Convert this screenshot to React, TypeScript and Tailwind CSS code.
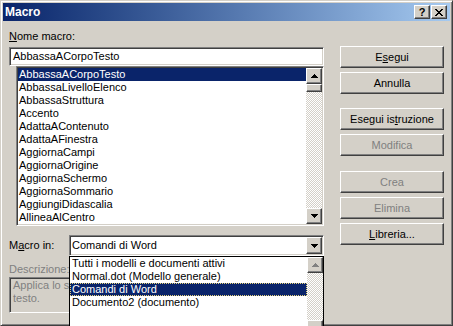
import React from 'react';

const macros = [
  "AbbassaACorpoTesto",
  "AbbassaLivelloElenco",
  "AbbassaStruttura",
  "Accento",
  "AdattaAContenuto",
  "AdattaAFinestra",
  "AggiornaCampi",
  "AggiornaOrigine",
  "AggiornaSchermo",
  "AggiornaSommario",
  "AggiungiDidascalia",
  "AllineaAlCentro",
];

const sources = [
  "Tutti i modelli e documenti attivi",
  "Normal.dot (Modello generale)",
  "Comandi di Word",
  "Documento2 (documento)",
];

// classic 3D edges
const raised =
  "border border-t-white border-l-white border-r-[#404040] border-b-[#404040] bg-[#d4d0c8] shadow-[inset_-1px_-1px_#808080]";
const sunken =
  "border border-t-[#808080] border-l-[#808080] border-r-white border-b-white shadow-[inset_1px_1px_#404040,inset_-1px_-1px_#d4d0c8] p-[1px]";
const checker =
  "bg-[image:repeating-conic-gradient(#d4d0c8_0%_25%,#ffffff_0%_50%)] bg-[length:2px_2px]";

const Arrow = ({ up, gray }: { up?: boolean; gray?: boolean }) => {
  const fill = gray ? "#808080" : "#000000";
  const rows = up ? [3, 2, 1, 0] : [0, 1, 2, 3];
  return (
    <svg width="7" height="4" viewBox="0 0 7 4" shapeRendering="crispEdges" className="block">
      {rows.map((inset, y) => (
        <rect key={y} x={inset} y={y} width={7 - inset * 2} height="1" fill={fill} />
      ))}
    </svg>
  );
};

const ScrollBtn = ({ up, gray, h = 16 }: { up?: boolean; gray?: boolean; h?: number }) => (
  <div className={`${raised} w-[16px] flex items-center justify-center ${h === 16 ? 'h-[16px]' : 'h-[17px]'}`}>
    <Arrow up={up} gray={gray} />
  </div>
);

const Btn = ({ children, disabled }: { children: React.ReactNode; disabled?: boolean }) => (
  <div
    className={`${raised} h-[22px] w-[104px] flex items-center justify-center leading-[13px] ${
      disabled ? 'text-[#808080]' : 'text-black'
    }`}
  >
    {children}
  </div>
);

const App: React.FC = () => {
  return (
    <div className="w-[453px] h-[326px] overflow-hidden bg-[#d4d0c8] font-['Liberation_Sans',Arial,sans-serif] text-[11px] text-black">
      <div className="relative h-full border border-t-[#d4d0c8] border-l-[#d4d0c8] border-r-[#404040] border-b-[#404040] shadow-[inset_1px_1px_#ffffff,inset_-1px_-1px_#808080] p-[2px]">
        {/* title bar */}
        <div className="h-[18px] flex items-center justify-between pl-[2px] pr-[3px] bg-linear-to-r from-[#0a246a] to-[#a6caf0]">
          <span className="text-white font-bold text-[12px] leading-[13px]">Macro</span>
          <div className="flex gap-[1px]">
            <div className={`${raised} w-[16px] h-[14px] flex items-center justify-center font-bold text-[11px] leading-[10px] pb-[1px]`}>
              ?
            </div>
            <div className={`${raised} w-[16px] h-[14px] flex items-center justify-center`}>
              <svg width="8" height="7" viewBox="0 0 8 7" shapeRendering="crispEdges">
                <path d="M0 0h2v1h-2zM6 0h2v1h-2zM1 1h2v1h-2zM5 1h2v1h-2zM2 2h4v1h-4zM3 3h2v1h-2zM2 4h4v1h-4zM1 5h2v1h-2zM5 5h2v1h-2zM0 6h2v1h-2zM6 6h2v1h-2z" fill="#000" />
              </svg>
            </div>
          </div>
        </div>

        <div className="flex gap-[16px] px-[6px]">
          {/* left column */}
          <div className="w-[315px] flex flex-col">
            <div className="mt-[9px] h-[13px] leading-[13px]">
              <u>N</u>ome macro:
            </div>
            <div className={`${sunken} mt-[4px] h-[19px] bg-white leading-[15px] pl-[3px]`}>AbbassaACorpoTesto</div>

            <div className={`${sunken} ml-[7px] w-[308px] h-[160px] bg-white flex`}>
              <div className="flex-1 flex flex-col">
                {macros.map((m, i) => (
                  <div
                    key={m}
                    className={`h-[13px] leading-[13px] pl-[1px] whitespace-nowrap ${
                      i === 0 ? 'bg-[#0a246a] text-white' : ''
                    }`}
                  >
                    {m}
                  </div>
                ))}
              </div>
              <div className="w-[16px] flex flex-col">
                <ScrollBtn up />
                <div className={`flex-1 ${checker} flex flex-col`}>
                  <div className={`${raised} h-[8px] w-[16px]`} />
                </div>
                <ScrollBtn />
              </div>
            </div>

            <div className="mt-[9px] h-[21px] flex items-center">
              <div className="w-[60px] leading-[13px]">
                M<u>a</u>cro in:
              </div>
              <div className="relative w-[255px] h-[21px]">
                <div className={`${sunken} h-full bg-white flex`}>
                  <div className="flex-1 leading-[17px] pl-[1px]">Comandi di Word</div>
                  <ScrollBtn h={17} />
                </div>
                {/* open dropdown */}
                <div className="absolute left-0 top-[21px] w-[255px] h-[84px] z-10 border border-black bg-white flex">
                  <div className="flex-1 flex flex-col">
                    {sources.map((s, i) => (
                      <div
                        key={s}
                        className={`h-[13px] leading-[13px] pl-[2px] whitespace-nowrap ${
                          i === 2
                            ? 'bg-[#0a246a] text-white outline-1 outline-dotted outline-[#e6d27a] -outline-offset-1'
                            : ''
                        }`}
                      >
                        {s}
                      </div>
                    ))}
                  </div>
                  <div className="w-[16px] flex flex-col">
                    <ScrollBtn up gray />
                    <div className={`h-[47px] ${checker}`} />
                    <ScrollBtn />
                  </div>
                </div>
              </div>
            </div>

            <div className="mt-[7px] h-[13px] leading-[13px] text-[#808080]">Descrizione:</div>
            <div className={`${sunken} mt-[1px] h-[36px] text-[#808080] leading-[13px]`}>
              {/* the open dropdown covers the rest of the description */}
              <div className="w-[58px] pl-[2px] overflow-hidden">
                <div className="whitespace-nowrap">Applica lo st</div>
                <div className="whitespace-nowrap">testo.</div>
              </div>
            </div>
          </div>

          {/* right column */}
          <div className="w-[104px] flex flex-col pt-[25px]">
            <Btn>
              E<u>s</u>egui
            </Btn>
            <div className="mt-[4px]">
              <Btn>Annulla</Btn>
            </div>
            <div className="mt-[14px]">
              <Btn>
                Esegui is<u>t</u>ruzione
              </Btn>
            </div>
            <div className="mt-[4px]">
              <Btn disabled>Modifica</Btn>
            </div>
            <div className="mt-[15px]">
              <Btn disabled>Crea</Btn>
            </div>
            <div className="mt-[4px]">
              <Btn disabled>Elimina</Btn>
            </div>
            <div className="mt-[4px]">
              <Btn>
                <u>L</u>ibreria...
              </Btn>
            </div>
          </div>
        </div>
      </div>
    </div>
  );
};

export default App;
